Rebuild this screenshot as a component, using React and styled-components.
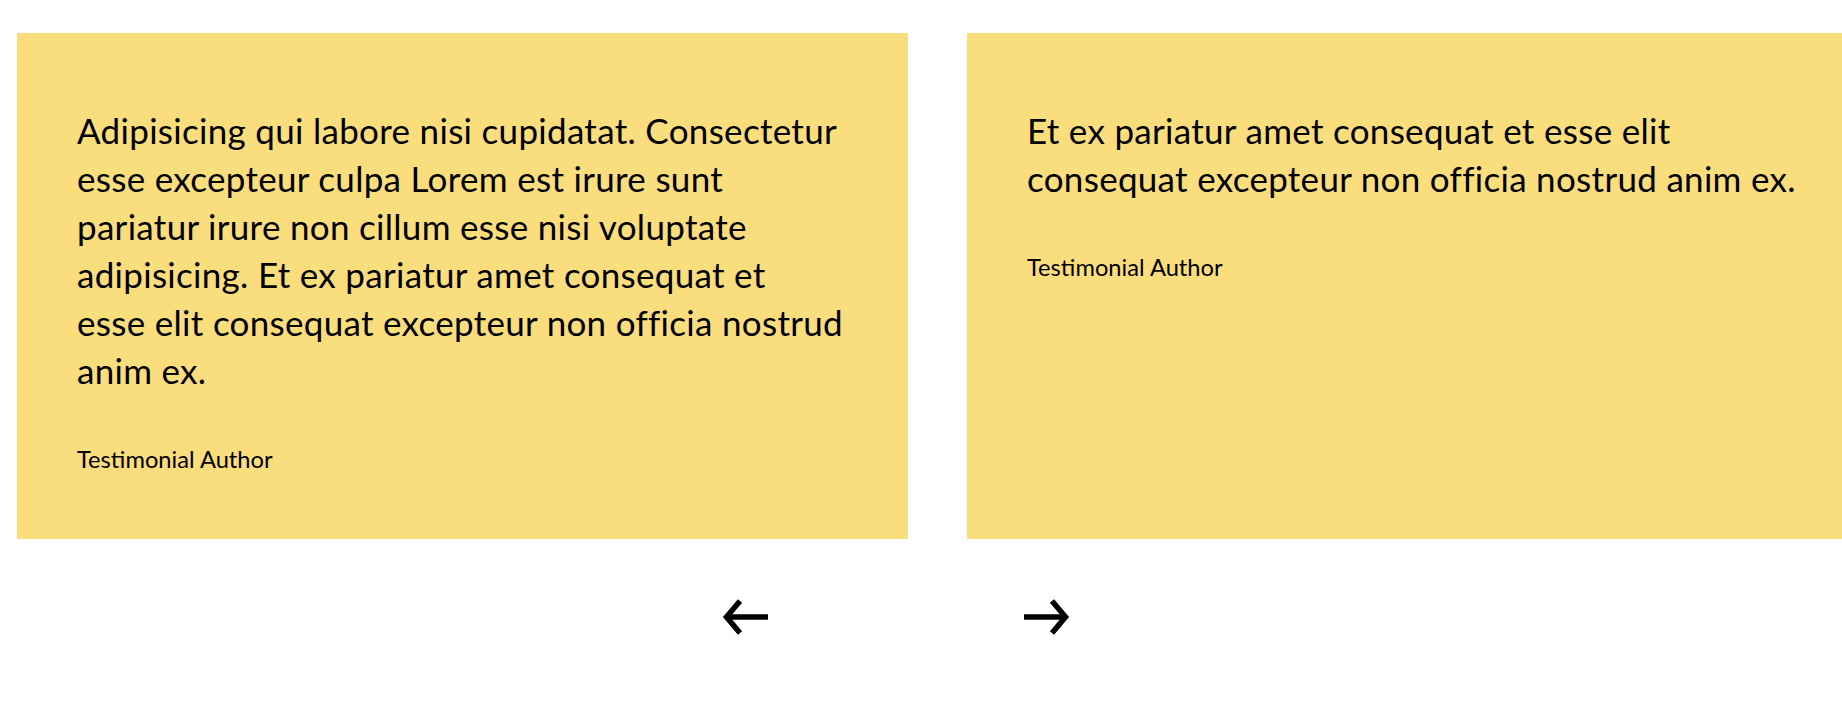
import React from 'react';
import styled, { createGlobalStyle } from 'styled-components';

const GlobalStyle = createGlobalStyle`
html, body {
    margin: 0;
    padding: 0;
    background: #fff;
    overflow: hidden;
}
body {
    font-family: Lato, "Liberation Sans", sans-serif;
    color: #000;
}
`;

const Page = styled.div`
display: flex;
flex-direction: column;
padding-top: 33px;
`;

const Track = styled.div`
display: flex;
gap: 59px;
padding-left: 17px;
overflow: hidden;
`;

const Card = styled.figure`
flex: 0 0 891px;
box-sizing: border-box;
margin: 0;
padding: 73px 58px 63px 60px;
background: #fadd7c;
display: flex;
flex-direction: column;
`;

const Quote = styled.blockquote`
margin: 0;
font-size: 35px;
letter-spacing: 0.3px;
line-height: 48px;
`;

// the lines keep the same breaks as the design
const Line = styled.span`
display: block;
white-space: nowrap;
`;

const Author = styled.figcaption`
margin-top: 49px;
font-size: 23.7px;
line-height: 33px;
`;

const Nav = styled.div`
display: flex;
justify-content: center;
gap: 254px;
padding-right: 50px;
margin-top: 60px;
`;

const ArrowButton = styled.button`
display: flex;
padding: 0;
border: 0;
background: transparent;
cursor: pointer;
svg {
    width: 48px;
    height: 36px;
    transform: ${p => (p.$flip ? 'scaleX(-1)' : 'none')};
}
`;

const testimonials = [
    {
        lines: [
            'Adipisicing qui labore nisi cupidatat. Consectetur',
            'esse excepteur culpa Lorem est irure sunt',
            'pariatur irure non cillum esse nisi voluptate',
            'adipisicing. Et ex pariatur amet consequat et',
            'esse elit consequat excepteur non officia nostrud',
            'anim ex.',
        ],
        author: 'Testimonial Author',
    },
    {
        lines: [
            'Et ex pariatur amet consequat et esse elit',
            'consequat excepteur non officia nostrud anim ex.',
        ],
        author: 'Testimonial Author',
    },
];

const Arrow = () => (
    <svg viewBox="0 0 48 36" fill="none" stroke="#000" strokeWidth="5.5" strokeLinecap="butt" strokeLinejoin="miter">
        <path d="M47 18H5" />
        <path d="M19 2L5.5 18L19 34" />
    </svg>
);

export default function App() {
    return (
        <Page>
            <GlobalStyle />
            <Track>
                {testimonials.map((t, i) => (
                    <Card key={i}>
                        <Quote>
                            {t.lines.map((l, j) => (
                                <Line key={j}>{l}</Line>
                            ))}
                        </Quote>
                        <Author>{t.author}</Author>
                    </Card>
                ))}
            </Track>
            <Nav>
                <ArrowButton aria-label="Previous">
                    <Arrow />
                </ArrowButton>
                <ArrowButton aria-label="Next" $flip>
                    <Arrow />
                </ArrowButton>
            </Nav>
        </Page>
    );
}
